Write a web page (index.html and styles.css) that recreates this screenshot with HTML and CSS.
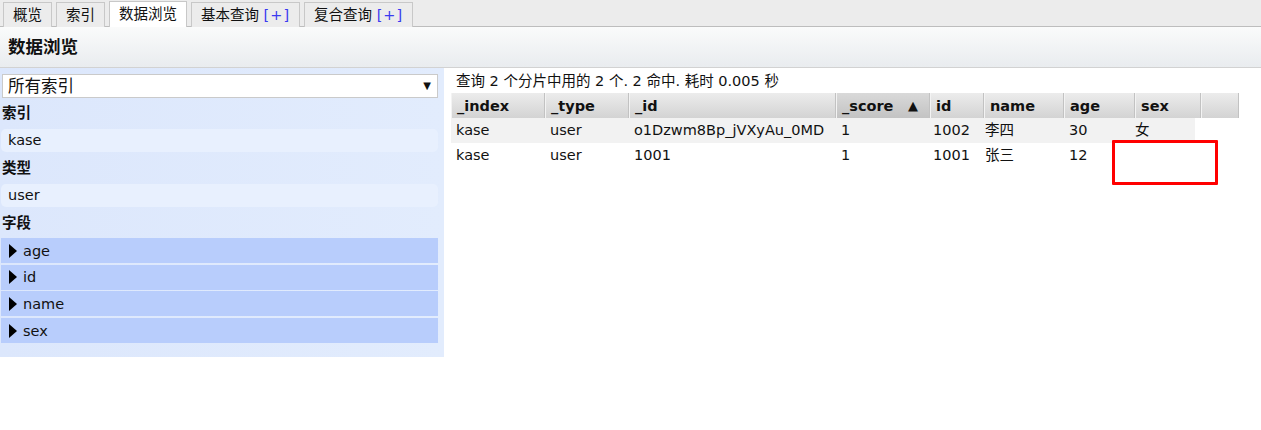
FILE: index.html
```html
<!DOCTYPE html>
<html lang="zh">
<head>
    <meta charset="UTF-8">
    <title>数据浏览</title>
    <link rel="stylesheet" href="styles.css">
</head>
<body>

<nav class="tabs">
    <span class="tab">概览</span>
    <span class="tab">索引</span>
    <span class="tab active">数据浏览</span>
    <span class="tab">基本查询 <em class="plus">[+]</em></span>
    <span class="tab">复合查询 <em class="plus">[+]</em></span>
</nav>

<header class="page-head">
    <h2>数据浏览</h2>
</header>

<main class="browser">
    <aside class="side">
        <div class="select">
            <span>所有索引</span>
            <span class="caret">&#9660;</span>
        </div>

        <div class="side-label">索引</div>
        <div class="side-item">kase</div>

        <div class="side-label">类型</div>
        <div class="side-item">user</div>

        <div class="side-label">字段</div>
        <div class="field"><span class="arrow"></span>age</div>
        <div class="field"><span class="arrow"></span>id</div>
        <div class="field"><span class="arrow"></span>name</div>
        <div class="field"><span class="arrow"></span>sex</div>
    </aside>

    <section class="results">
        <p class="summary">查询 2 个分片中用的 2 个. 2 命中. 耗时 0.005 秒</p>

        <div class="thead">
            <div class="th">_index</div>
            <div class="th">_type</div>
            <div class="th">_id</div>
            <div class="th sorted">_score <span class="sort">&#9650;</span></div>
            <div class="th">id</div>
            <div class="th">name</div>
            <div class="th">age</div>
            <div class="th">sex</div>
            <div class="th"></div>
        </div>

        <div class="row odd">
            <div class="td">kase</div>
            <div class="td">user</div>
            <div class="td">o1Dzwm8Bp_jVXyAu_0MD</div>
            <div class="td">1</div>
            <div class="td">1002</div>
            <div class="td">李四</div>
            <div class="td">30</div>
            <div class="td">女</div>
        </div>
        <div class="row">
            <div class="td">kase</div>
            <div class="td">user</div>
            <div class="td">1001</div>
            <div class="td">1</div>
            <div class="td">1001</div>
            <div class="td">张三</div>
            <div class="td">12</div>
            <div class="td"></div>
        </div>

        <!-- highlight box drawn over the empty sex cell -->
        <div class="mark"></div>
    </section>
</main>

</body>
</html>
```

FILE: styles.css
```css
/* Basic reset */
* {
    box-sizing: border-box;
    margin: 0;
    padding: 0;
}

body {
    font-family: "DejaVu Sans", "Noto Sans CJK SC", sans-serif;
    font-size: 14.5px;
    color: #111;
    background: #fff;
}

/* --- Tabs --- */
.tabs {
    display: flex;
    align-items: flex-end;
    gap: 4px;
    height: 27px;
    padding-left: 3px;
    background: #ececec;
    border-bottom: 1px solid #bdbdbd;
}

.tab {
    height: 25px;
    line-height: 24px;
    padding: 0 9px;
    border: 1px solid #c8c8c8;
    border-bottom: none;
    background: #ececec;
    margin-bottom: -1px;
    white-space: nowrap;
}

.tab.active {
    height: 26px;
    background: #fff;
}

.plus {
    font-style: normal;
    color: #3a3af0;
    letter-spacing: 1px;
}

/* --- Page header --- */
.page-head {
    height: 41px;
    padding-left: 8px;
    background: linear-gradient(#fafbfb, #e9ecef);
    border-bottom: 1px solid #d2d2d2;
}

.page-head h2 {
    font-size: 17.5px;
    line-height: 40px;
    font-weight: bold;
}

/* --- Layout --- */
.browser {
    display: flex;
    align-items: flex-start;
}

/* Left side filters */
.side {
    width: 444px;
    flex-shrink: 0;
    padding: 6px 6px 12px 1px;
    background: linear-gradient(to right, #dce7fc, #e2ecfd);
}

.select {
    display: flex;
    justify-content: space-between;
    align-items: flex-end;
    height: 24px;
    margin-left: 1px;
    padding: 0 6px 0 5px;
    background: #fff;
    border: 1px solid #cacaca;
    font-size: 16.5px;
    line-height: 20px;
    overflow: hidden;
}

.caret {
    font-size: 10px;
    line-height: 18px;
    align-self: center;
}

.side-label {
    height: 30px;
    line-height: 30px;
    padding-left: 1px;
    font-weight: bold;
}

.side-item {
    height: 23px;
    line-height: 23px;
    margin: 1px 0;
    padding-left: 7px;
    background: #e8f0fe;
    border-radius: 5px;
}

.field {
    display: flex;
    align-items: center;
    height: 25px;
    margin-bottom: 1.7px;
    padding-left: 8px;
    background: #b8cdfc;
}

.arrow {
    width: 0;
    height: 0;
    margin-right: 6px;
    border-top: 7px solid transparent;
    border-bottom: 7px solid transparent;
    border-left: 8px solid #000;
}

/* Right side results */
.results {
    position: relative;
    flex: 1;
    padding: 2px 0 0 7px;
}

.summary {
    height: 23px;
    line-height: 22px;
    padding-left: 5px;
}

.thead {
    display: grid;
    grid-template-columns: 94px 84px 207px 94px 54px 80px 71px 66px 38px;
    width: max-content;
    height: 25px;
}

.th {
    display: flex;
    justify-content: space-between;
    align-items: center;
    padding: 0 11px 0 5px;
    font-weight: bold;
    background: linear-gradient(#ececec, #d3d3d3);
    border-left: 1px solid #f3f3f3;
    border-right: 1px solid #c2c2c2;
}

.th.sorted {
    background: linear-gradient(#d9d9d9, #c3c3c3);
}

.sort {
    font-size: 13px;
}

.row {
    display: grid;
    grid-template-columns: 94px 84px 207px 92px 52px 84px 66px 65px;
    width: max-content;
    height: 25px;
    line-height: 25px;
}

.row.odd {
    background: #f2f2f2;
}

.td {
    padding-left: 5px;
    white-space: nowrap;
}

.mark {
    position: absolute;
    left: 668px;
    top: 72px;
    width: 106px;
    height: 45px;
    border: 3px solid #f00;
    border-radius: 1px;
}
```
